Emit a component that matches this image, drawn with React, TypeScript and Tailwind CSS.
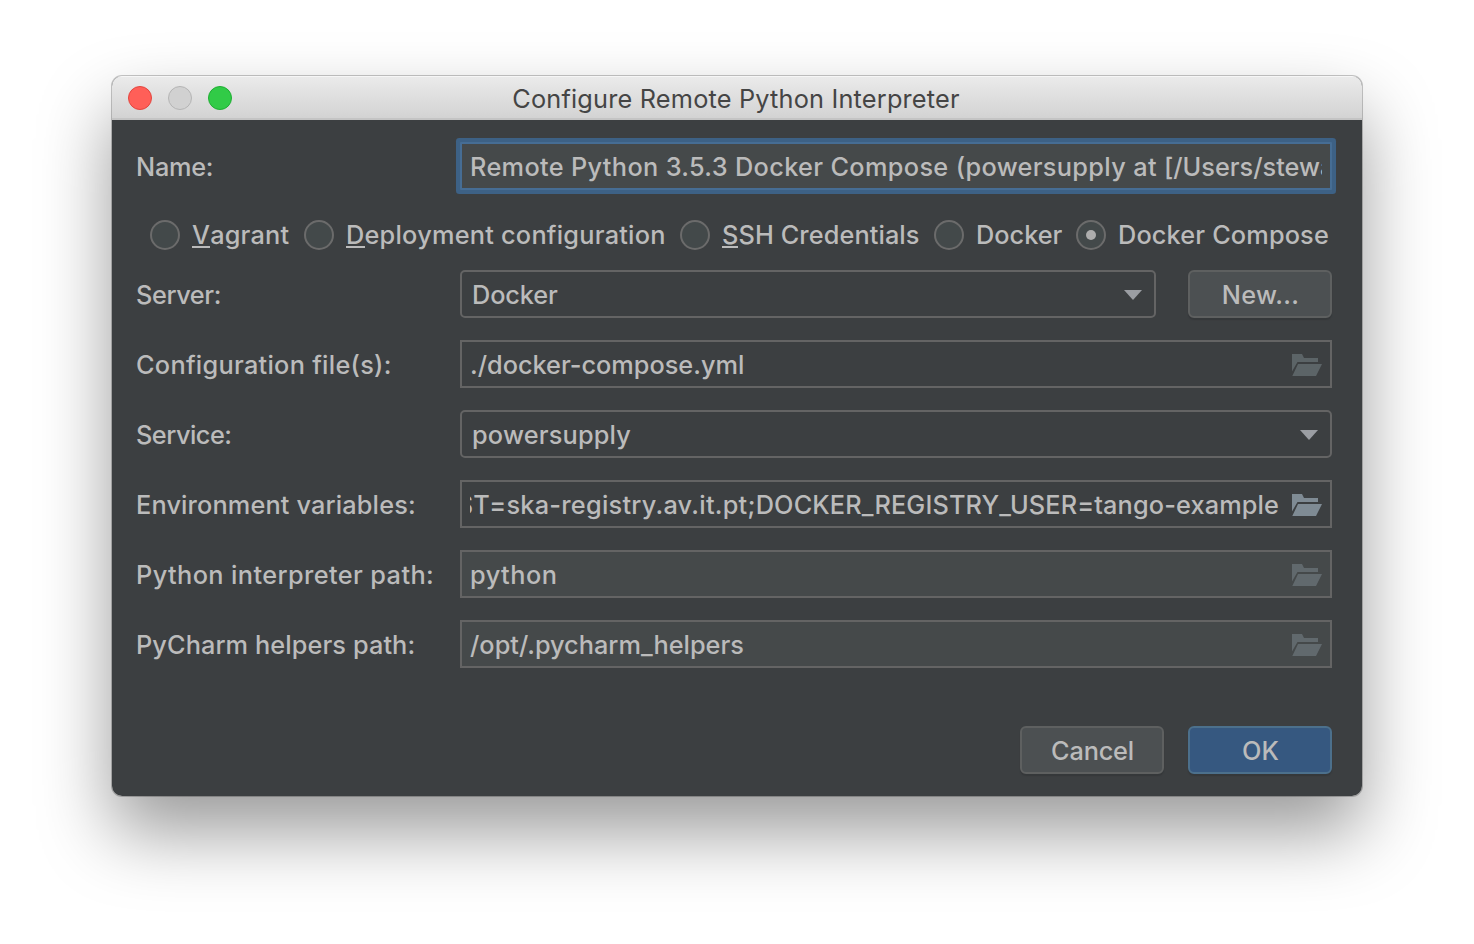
import type { ReactNode } from "react";

const folder = "M0 0H10L12 4H26V8H5.5L0 17.5ZM6 10H30L24 22H0.3Z";

function FolderIcon({ className }: { className: string }) {
  return (
    <svg width="30" height="22" viewBox="0 0 30 22" className={`shrink-0 ${className}`} aria-hidden="true">
      <path d={folder} fill="currentColor" />
    </svg>
  );
}

function Arrow() {
  return (
    <svg width="18" height="10" viewBox="0 0 18 10" className="mt-[2px] shrink-0 text-[#9b9ea3]" aria-hidden="true">
      <path d="M0 0H18L9 10Z" fill="currentColor" />
    </svg>
  );
}

function Row({ label, tracking, children }: { label: string; tracking: string; children: ReactNode }) {
  return (
    <div className="flex h-12 items-center">
      <div className={`w-[324px] shrink-0 whitespace-nowrap pt-[2px] ${tracking}`}>{label}</div>
      {children}
    </div>
  );
}

function PathField({
  value,
  tracking = "",
  fill,
  icon,
  end = false,
}: {
  value: ReactNode;
  tracking?: string;
  fill: string;
  icon: string;
  end?: boolean;
}) {
  return (
    <div className={`flex h-12 w-[872px] items-center border-2 border-[#646464] pr-2 pl-2 ${fill}`}>
      <div className={`flex h-full w-[810px] shrink-0 items-center overflow-hidden whitespace-nowrap pt-[2px] ${end ? "justify-end pr-px" : ""}`}>
        <span className={`shrink-0 ${tracking}`}>{value}</span>
      </div>
      <FolderIcon className={`ml-[12px] mt-[2px] ${icon}`} />
    </div>
  );
}

function Combo({ value, tracking, width }: { value: string; tracking: string; width: string }) {
  return (
    <div className={`flex h-12 items-center justify-between rounded-[5px] border-2 border-[#646464] pr-[12px] pl-[10px] ${width}`}>
      <span className={`pt-[2px] ${tracking}`}>{value}</span>
      <Arrow />
    </div>
  );
}

function Radio({
  label,
  underline = false,
  checked = false,
  width,
  tracking,
}: {
  label: string;
  underline?: boolean;
  checked?: boolean;
  width: string;
  tracking: string;
}) {
  return (
    <div className={`flex shrink-0 items-center gap-3 ${width}`}>
      <span className="flex size-[30px] shrink-0 items-center justify-center rounded-full border-2 border-[#6b6b6b] bg-[#43494a]">
        {checked && <span className="size-[10px] rounded-full bg-[#adadad]" />}
      </span>
      <span className={`whitespace-nowrap ${tracking}`}>
        {underline ? <span className="inline-block h-[29px] border-b-2 border-[#bbbbbb] leading-[32px]">{label[0]}</span> : label[0]}
        {label.slice(1)}
      </span>
    </div>
  );
}

function Button({ label, primary = false, tracking }: { label: string; primary?: boolean; tracking: string }) {
  return (
    <button
      className={`flex h-12 w-36 shrink-0 items-center justify-center rounded-[6px] border-2 pt-[2px] pl-px shadow-[0_2px_1px_#35383a] ${
        primary ? "border-[#4c708c] bg-[#365880]" : "border-[#5e6060] bg-[#4c5052]"
      } ${tracking}`}
    >
      {label}
    </button>
  );
}

export default function App() {
  return (
    <div className="h-[944px] w-[1474px] overflow-hidden bg-white px-[112px] pt-[76px] font-['Inter',sans-serif] text-[25.3px] leading-[32px] font-[450] text-[#bbbbbb]">
      <div className="h-[720px] w-[1250px] rounded-[10px] shadow-[0_0_0_1px_rgba(0,0,0,0.22),0_36px_72px_rgba(0,0,0,0.4)]">
        <div className="flex h-full flex-col overflow-hidden rounded-[10px] bg-[#3c3f41]">
          <header className="grid h-11 shrink-0 grid-cols-[160px_1fr_162px] items-center border-b-2 border-[#c4c4c4] bg-linear-to-b from-[#ebebeb] to-[#d3d3d3] shadow-[inset_0_1px_0_#f6f6f6]">
            <div className="flex gap-4 pl-4 pt-[2px]">
              <span className="size-6 rounded-full border border-[#e2463f] bg-[#ff5f58]" />
              <span className="size-6 rounded-full border border-[#b4b4b4] bg-[#d1d1d1]" />
              <span className="size-6 rounded-full border border-[#1fae33] bg-[#31cb47]" />
            </div>
            <h1 className="pt-[3px] text-center font-normal tracking-[0.19px] text-[#454545]">Configure Remote Python Interpreter</h1>
          </header>

          <main className="flex flex-1 flex-col px-6 pt-[22px]">
            <Row label="Name:" tracking="tracking-[-0.25px]">
              <div className="flex h-12 w-[872px] items-center rounded-[1px] border-2 border-[#466d94] bg-[#45494a] px-2 shadow-[0_0_0_4px_#3d6185]">
                <div className="w-full overflow-hidden whitespace-nowrap pt-[2px] tracking-[0.34px]">
                  Remote Python 3.5.3 Docker Compose (powersupply at <span className="tracking-[0px]">[/Users/stewa</span>
                </div>
              </div>
            </Row>

            <div className="mt-[30px] ml-[14px] flex h-[30px] items-center">
              <Radio label="Vagrant" underline width="w-[154px]" tracking="tracking-[0.2px]" />
              <Radio label="Deployment configuration" underline width="w-[376px]" tracking="tracking-[0.24px]" />
              <Radio label="SSH Credentials" underline width="w-[254px]" tracking="tracking-[0.1px]" />
              <Radio label="Docker" width="w-[142px]" tracking="tracking-[0px]" />
              <Radio label="Docker Compose" checked width="w-[256px]" tracking="tracking-[0.15px]" />
            </div>

            <div className="mt-5 flex flex-col gap-[22px]">
              <Row label="Server:" tracking="tracking-[-0.4px]">
                <Combo value="Docker" width="w-[696px]" tracking="tracking-[-0.1px]" />
                <div className="ml-8">
                  <Button label="New..." tracking="tracking-[0.3px]" />
                </div>
              </Row>
              <Row label="Configuration file(s):" tracking="tracking-[0.28px]">
                <PathField value="./docker-compose.yml" tracking="tracking-[0px]" fill="bg-[#3c3f41]" icon="text-[#5c6467]" />
              </Row>
              <Row label="Service:" tracking="tracking-[-0.5px]">
                <Combo value="powersupply" width="w-[872px]" tracking="tracking-[0.2px]" />
              </Row>
              <Row label="Environment variables:" tracking="tracking-[0.15px]">
                <PathField
                  value={
                    <>
                      <span className="tracking-[0.26px]">ST=ska-registry.av.it.pt;</span>
                      <span className="tracking-[0.13px]">DOCKER_REGISTRY_USER=tango-example</span>
                    </>
                  }
                  fill="bg-[#3c3f41]"
                  icon="text-[#7f8b94]"
                  end
                />
              </Row>
              <Row label="Python interpreter path:" tracking="tracking-[0.4px]">
                <PathField value="python" tracking="tracking-[0.5px]" fill="bg-[#45494a]" icon="text-[#61696d]" />
              </Row>
              <Row label="PyCharm helpers path:" tracking="tracking-[0.1px]">
                <PathField value="/opt/.pycharm_helpers" tracking="tracking-[0px]" fill="bg-[#45494a]" icon="text-[#61696d]" />
              </Row>
            </div>

            <footer className="mt-[58px] flex justify-end gap-6 pr-[6px]">
              <Button label="Cancel" tracking="tracking-[-0.2px]" />
              <Button label="OK" primary tracking="tracking-[0px]" />
            </footer>
          </main>
        </div>
      </div>
    </div>
  );
}
